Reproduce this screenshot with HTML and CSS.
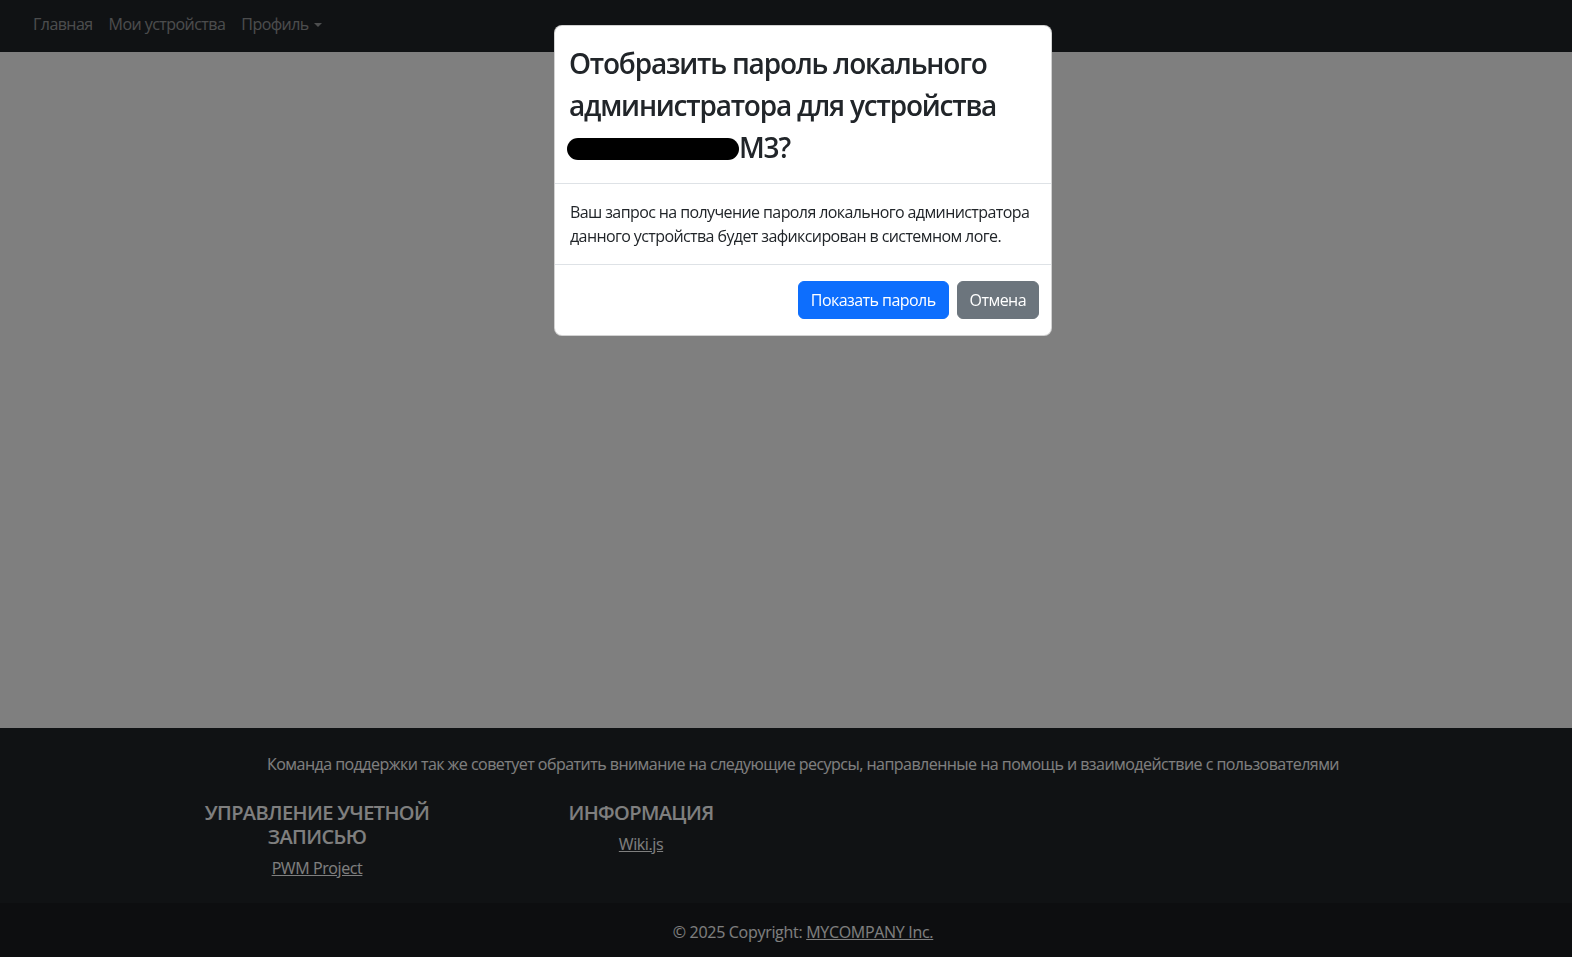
FILE: index.html
```html
<!DOCTYPE html>
<html lang="ru">
<head>
<meta charset="utf-8">
<title>Устройства</title>
<link rel="stylesheet" href="styles.css">
</head>
<body>
<div class="page">
  <nav class="navbar">
    <ul class="nav">
      <li><a class="nav-link" href="#">Главная</a></li>
      <li><a class="nav-link" href="#">Мои устройства</a></li>
      <li><a class="nav-link dropdown" href="#">Профиль<span class="caret"></span></a></li>
    </ul>
  </nav>
  <main class="main"></main>
  <footer class="footer">
    <div class="footer-inner">
      <p class="footer-lead">Команда поддержки так же советует обратить внимание на следующие ресурсы, направленные на помощь и взаимодействие с пользователями</p>
      <div class="footer-cols">
        <div class="footer-col">
          <h5 class="footer-title">Управление учетной записью</h5>
          <a class="footer-link" href="#">PWM Project</a>
        </div>
        <div class="footer-col">
          <h5 class="footer-title">Информация</h5>
          <a class="footer-link" href="#">Wiki.js</a>
        </div>
      </div>
    </div>
    <div class="copyright">© 2025 Copyright: <a class="footer-link" href="#">MYCOMPANY Inc.</a></div>
  </footer>
</div>

<div class="backdrop"></div>
<div class="modal">
  <div class="modal-dialog">
    <div class="modal-header">
      <h3 class="modal-title">Отобразить пароль локального администратора для устройства <span class="redact"></span>M3?</h3>
    </div>
    <div class="modal-body">
      Ваш запрос на получение пароля локального администратора данного устройства будет зафиксирован в системном логе.
    </div>
    <div class="modal-footer">
      <button class="btn btn-primary" type="button">Показать пароль</button>
      <button class="btn btn-secondary" type="button">Отмена</button>
    </div>
  </div>
</div>
</body>
</html>
```
FILE: styles.css
```css
* { box-sizing: border-box; }
html, body { margin: 0; padding: 0; height: 100%; }
body {
  font-family: "Open Sans", "Noto Sans", sans-serif;
  font-size: 16px;
  line-height: 1.5;
  color: #212529;
  background: #fff;
  overflow: hidden;
}
.page {
  min-height: 100vh;
  display: flex;
  flex-direction: column;
}
.navbar {
  background: #212529;
  height: 52px;
  display: flex;
  align-items: center;
  padding-left: 25px;
  padding-bottom: 5px;
}
.nav {
  list-style: none;
  margin: 0;
  padding: 0;
  display: flex;
}
.nav-link {
  display: block;
  padding: 0 8px;
  color: rgba(255,255,255,.55);
  text-decoration: none;
  line-height: 24px;
  letter-spacing: -0.55px;
}
.caret {
  display: inline-block;
  margin-left: 5px;
  vertical-align: 3px;
  border-top: 4px solid;
  border-left: 4px solid transparent;
  border-right: 4px solid transparent;
}
.main { flex: 1; background: #fff; }
.footer {
  background: #212529;
  color: #fff;
  text-align: center;
}
.footer-inner {
  padding: 24px 0 23px 34px;
}
.footer-lead {
  margin: 0;
  letter-spacing: -0.53px;
}
.footer-cols {
  display: flex;
  margin-top: 25px;
  padding-left: 121px;
}
.footer-col {
  width: 324px;
  padding: 0 12px;
}
.footer-title {
  margin: 0 0 7px;
  font-size: 20px;
  line-height: 24px;
  font-weight: 600;
  text-transform: uppercase;
  letter-spacing: -0.6px;
}
.footer-link {
  color: #fff;
  text-decoration: underline;
  letter-spacing: -0.4px;
}
.copyright {
  background: rgba(0,0,0,.2);
  padding: 17px 0 13px 34px;
  line-height: 24px;
  letter-spacing: -0.3px;
}
.copyright .footer-link { letter-spacing: -0.3px; }
.backdrop {
  position: fixed;
  inset: 0;
  background: rgba(0,0,0,.5);
}
.modal {
  position: fixed;
  inset: 0;
}
.modal-dialog {
  position: absolute;
  top: 25px;
  left: 554px;
  width: 498px;
  background: #fff;
  border: 1px solid rgba(0,0,0,.175);
  border-radius: 8px;
  overflow: hidden;
}
.modal-header {
  padding: 16px 16px 15px 14px;
  border-bottom: 1px solid #dee2e6;
}
.modal-title {
  margin: 0;
  font-size: 28px;
  line-height: 42px;
  font-weight: 600;
  letter-spacing: -1.2px;
}
.redact {
  display: inline-block;
  width: 172px;
  height: 22px;
  margin-left: -2px;
  background: #000;
  border-radius: 11px;
  vertical-align: -2px;
}
.modal-body {
  padding: 16px 10px 16px 15px;
  letter-spacing: -0.6px;
}
.modal-footer {
  border-top: 1px solid #dee2e6;
  padding: 12px 8px 12px 12px;
  display: flex;
  justify-content: flex-end;
}
.btn {
  margin: 4px;
  font-family: inherit;
  font-size: 16px;
  line-height: 24px;
  padding: 6px 12px;
  border: 1px solid transparent;
  border-radius: 6px;
  color: #fff;
  letter-spacing: -0.55px;
}
.btn-primary { background: #0d6efd; border-color: #0d6efd; }
.btn-secondary { background: #6c757d; border-color: #6c757d; }
```
